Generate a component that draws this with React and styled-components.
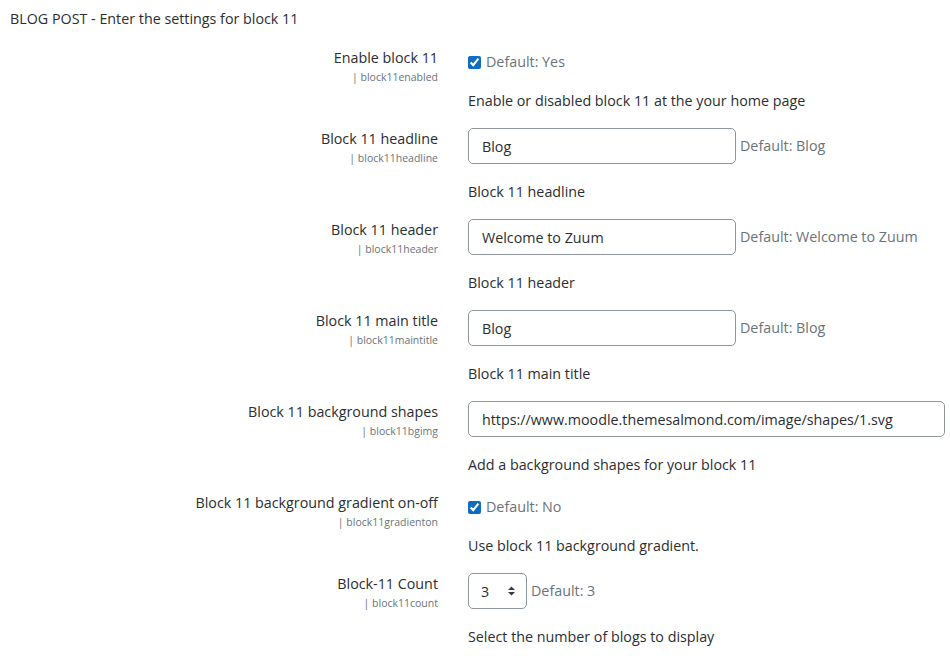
import React from 'react'
import styled, { createGlobalStyle } from 'styled-components'

const GlobalStyle = createGlobalStyle`
  body {
    margin: 0;
    background: #fff;
    font-family: "Segoe UI", "Open Sans", "Noto Sans", sans-serif;
    font-size: 14.3px;
    color: #2a2e32;
  }
`

const Page = styled.div`
  padding: 8px 0 0 0;
  width: 950px;
`

const Heading = styled.h3`
  margin: 0 0 17px 10px;
  font-size: 14.3px;
  font-weight: 400;
  line-height: 22px;
  color: #2a2e32;
`

const Row = styled.div`
  display: flex;
  gap: 30px;
  margin-bottom: 16px;
`

const LabelCol = styled.div`
  width: 438px;
  flex: none;
  text-align: right;
`

const Label = styled.div`
  font-size: 14.3px;
  line-height: 22px;
  color: #2a2e32;
`

const Key = styled.div`
  font-size: 10.5px;
  line-height: 16px;
  color: #6a737b;
`

const ControlCol = styled.div`
  flex: 1;
  min-width: 0;
  padding-top: ${p => p.$top || 0}px;
`

const Line = styled.div`
  display: flex;
  align-items: center;
  gap: 4px;
`

const Input = styled.div`
  box-sizing: border-box;
  width: ${p => p.$w}px;
  height: 36px;
  border: 1px solid #8f959e;
  border-radius: 5px;
  padding: 0 13px;
  display: flex;
  align-items: center;
  font-size: 14.3px;
  color: #2a2e32;
  white-space: nowrap;
`

const Default = styled.span`
  color: #6a737b;
  font-size: 14.3px;
  line-height: 22px;
`

const Check = styled.input`
  width: 13px;
  height: 13px;
  margin: 0 1px 0 0;
  accent-color: #0f6cbf;
`

const Select = styled.div`
  box-sizing: border-box;
  width: 59px;
  height: 36px;
  border: 1px solid #8f959e;
  border-radius: 5px;
  padding: 0 10px 0 12px;
  display: flex;
  align-items: center;
  justify-content: space-between;
  font-size: 14.3px;
  color: #2a2e32;
`

const Desc = styled.div`
  margin-top: 17px;
  font-size: 14.3px;
  line-height: 22px;
  color: #2a2e32;
`

const Caret = () => (
  <svg width="9" height="12" viewBox="0 0 9 12">
    <path d="M1 5 L4.5 1.5 L8 5 Z M1 7 L4.5 10.5 L8 7 Z" fill="#343a40" />
  </svg>
)

const settings = [
  { label: 'Enable block 11', key: 'block11enabled', type: 'check', def: 'Yes', desc: 'Enable or disabled block 11 at the your home page' },
  { label: 'Block 11 headline', key: 'block11headline', type: 'text', value: 'Blog', w: 268, def: 'Blog', desc: 'Block 11 headline' },
  { label: 'Block 11 header', key: 'block11header', type: 'text', value: 'Welcome to Zuum', w: 268, def: 'Welcome to Zuum', desc: 'Block 11 header' },
  { label: 'Block 11 main title', key: 'block11maintitle', type: 'text', value: 'Blog', w: 268, def: 'Blog', desc: 'Block 11 main title' },
  { label: 'Block 11 background shapes', key: 'block11bgimg', type: 'text', value: 'https://www.moodle.themesalmond.com/image/shapes/1.svg', w: 477, desc: 'Add a background shapes for your block 11' },
  { label: 'Block 11 background gradient on-off', key: 'block11gradienton', type: 'check', def: 'No', desc: 'Use block 11 background gradient.' },
  { label: 'Block-11 Count', key: 'block11count', type: 'select', value: '3', def: '3', desc: 'Select the number of blogs to display' },
]

export default function App() {
  return (
    <Page>
      <GlobalStyle />
      <Heading>BLOG POST - Enter the settings for block 11</Heading>
      {settings.map(s => (
        <Row key={s.key}>
          <LabelCol>
            <Label>{s.label}</Label>
            <Key>| {s.key}</Key>
          </LabelCol>
          <ControlCol $top={s.type === 'check' ? 4 : 0}>
            <Line>
              {s.type === 'check' && <Check type="checkbox" checked readOnly />}
              {s.type === 'text' && <Input $w={s.w}>{s.value}</Input>}
              {s.type === 'select' && <Select>{s.value}<Caret /></Select>}
              {s.def && <Default>Default: {s.def}</Default>}
            </Line>
            <Desc>{s.desc}</Desc>
          </ControlCol>
        </Row>
      ))}
    </Page>
  )
}
